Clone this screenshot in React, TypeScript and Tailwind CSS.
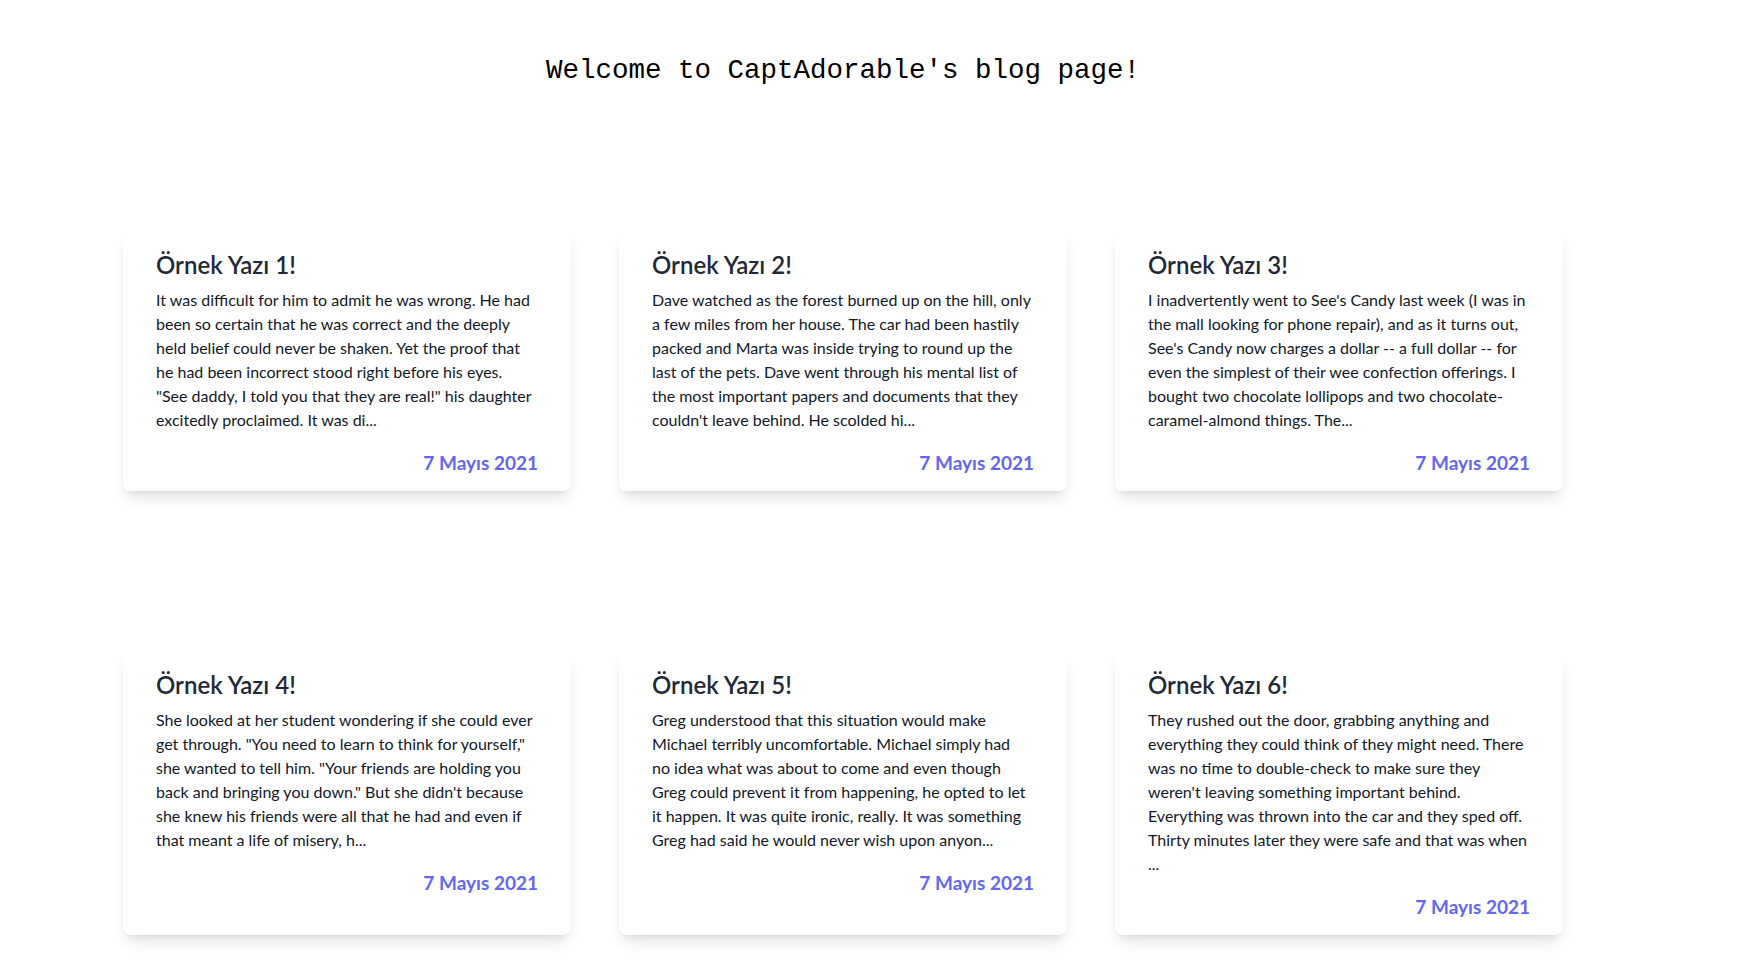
import React from "react";

type Post = { title: string; lines: string[] };

const posts: Post[] = [
  {
    title: "Örnek Yazı 1!",
    lines: [
      "It was difficult for him to admit he was wrong. He had",
      "been so certain that he was correct and the deeply",
      "held belief could never be shaken. Yet the proof that",
      "he had been incorrect stood right before his eyes.",
      "\"See daddy, I told you that they are real!\" his daughter",
      "excitedly proclaimed. It was di...",
    ],
  },
  {
    title: "Örnek Yazı 2!",
    lines: [
      "Dave watched as the forest burned up on the hill, only",
      "a few miles from her house. The car had been hastily",
      "packed and Marta was inside trying to round up the",
      "last of the pets. Dave went through his mental list of",
      "the most important papers and documents that they",
      "couldn't leave behind. He scolded hi...",
    ],
  },
  {
    title: "Örnek Yazı 3!",
    lines: [
      "I inadvertently went to See's Candy last week (I was in",
      "the mall looking for phone repair), and as it turns out,",
      "See's Candy now charges a dollar -- a full dollar -- for",
      "even the simplest of their wee confection offerings. I",
      "bought two chocolate lollipops and two chocolate-",
      "caramel-almond things. The...",
    ],
  },
  {
    title: "Örnek Yazı 4!",
    lines: [
      "She looked at her student wondering if she could ever",
      "get through. \"You need to learn to think for yourself,\"",
      "she wanted to tell him. \"Your friends are holding you",
      "back and bringing you down.\" But she didn't because",
      "she knew his friends were all that he had and even if",
      "that meant a life of misery, h...",
    ],
  },
  {
    title: "Örnek Yazı 5!",
    lines: [
      "Greg understood that this situation would make",
      "Michael terribly uncomfortable. Michael simply had",
      "no idea what was about to come and even though",
      "Greg could prevent it from happening, he opted to let",
      "it happen. It was quite ironic, really. It was something",
      "Greg had said he would never wish upon anyon...",
    ],
  },
  {
    title: "Örnek Yazı 6!",
    lines: [
      "They rushed out the door, grabbing anything and",
      "everything they could think of they might need. There",
      "was no time to double-check to make sure they",
      "weren't leaving something important behind.",
      "Everything was thrown into the car and they sped off.",
      "Thirty minutes later they were safe and that was when",
      "...",
    ],
  },
];

function Card({ post }: { post: Post }) {
  return (
    <div className="bg-white rounded-lg shadow-lg pt-[19px] pb-[14px] pl-[33px] pr-[33px]">
      <h2 className="text-[24px] leading-[32px] font-semibold text-[#1f2937]">{post.title}</h2>
      <p className="mt-[7px] text-[16px] leading-[24px] text-[#111827]">
        {post.lines.map((l, i) => (
          <span key={i} className="block whitespace-nowrap">
            {l}
          </span>
        ))}
      </p>
      <div className="mt-[17px] text-right text-[19px] leading-[28px] font-bold text-[#6366f1]">
        7 Mayıs 2021
      </div>
    </div>
  );
}

export default function App() {
  return (
    <div
      className="min-h-screen bg-white"
      style={{ fontFamily: "Lato, 'Noto Sans', sans-serif" }}
    >
      <div className="ml-[123px] w-[1440px] pt-[55px] pb-[31px]">
        <h1
          className="text-center text-[27.5px] leading-[32px] text-black"
          style={{ fontFamily: "'Liberation Mono', 'DejaVu Sans Mono', monospace" }}
        >
          Welcome to CaptAdorable's blog page!
        </h1>
        <div className="mt-[143px] grid grid-cols-3 gap-x-12 gap-y-[159px]">
          {posts.map((p) => (
            <Card key={p.title} post={p} />
          ))}
        </div>
      </div>
    </div>
  );
}
